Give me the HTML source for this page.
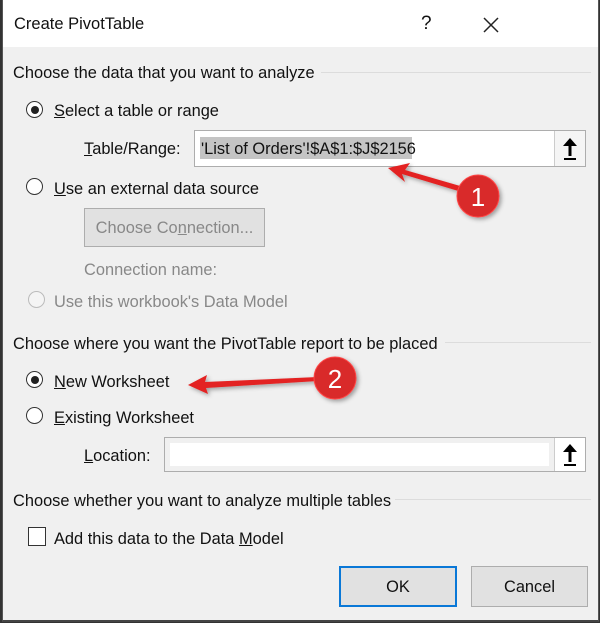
<!DOCTYPE html><html><head><style>
body{margin:0;width:600px;height:623px;overflow:hidden;background:#333;font-family:"Liberation Sans",sans-serif;}
.dlg{position:absolute;left:2px;top:0;width:595px;height:620px;background:#f0f0f0;border-left:1px solid #555;border-right:1px solid #555;border-bottom:2px solid #444}
.title{position:absolute;left:0;top:0;width:595px;height:47px;background:#fff}
.t{position:absolute;font-size:16.4px;color:#111;white-space:nowrap}
.g{color:#888}
.sep{position:absolute;height:1px;background:#dcdcdc}
.rad{position:absolute;width:15px;height:15px;border:1.5px solid #333;border-radius:50%;background:#fff}
.rad.on::after{content:"";position:absolute;left:3.5px;top:3.5px;width:8px;height:8px;border-radius:50%;background:#222}
.box{position:absolute;background:#fff;border:1px solid #adadad}
.btn{position:absolute;background:#e1e1e1;border:1px solid #adadad;font-size:16.4px;text-align:center;color:#111}
.up{position:absolute;width:30px;background:#fff;border-left:1px solid #ccc;top:0;bottom:0;right:0;background:#f0f0f0}
u{text-decoration:underline}
</style></head><body>
<div class="dlg">
<div class="title"></div>
<div class="t" style="left:11px;top:15px;font-size:16.5px">Create PivotTable</div>
<div class="t" style="left:418px;top:13px;font-size:19px">?</div>
<svg style="position:absolute;left:480px;top:17px" width="16" height="16"><path d="M1 1L15 15M15 1L1 15" stroke="#222" stroke-width="1.5"/></svg>

<div class="t" style="left:10px;top:64px">Choose the data that you want to analyze</div>
<div class="sep" style="left:318px;top:72px;width:270px"></div>
<div class="rad on" style="left:23px;top:101px"></div>
<div class="t" style="left:51px;top:102px"><u>S</u>elect a table or range</div>
<div class="t" style="left:81px;top:140px"><u>T</u>able/Range:</div>
<div class="box" style="left:191px;top:130px;width:390px;height:35px">
 <div style="position:absolute;left:5px;top:6px;height:22px;width:212px;background:#c4c4c4"></div>
 <div class="t" style="left:6px;top:9px">'List of Orders'!$A$1:$J$2156</div>
 <div class="up" style="width:30px;background:#f5f5f5"><svg width="30" height="35"><path d="M15 13V25" stroke="#000" stroke-width="3"/><path d="M8 15L15 7L22 15Z" fill="#000"/><path d="M9 28H21" stroke="#000" stroke-width="2"/></svg></div>
</div>
<div class="rad" style="left:23px;top:178px"></div>
<div class="t" style="left:51px;top:180px"><u>U</u>se an external data source</div>
<div class="btn g" style="left:81px;top:208px;width:179px;height:37px;line-height:39px;color:#888">Choose Co<u>n</u>nection...</div>
<div class="t g" style="left:81px;top:261px">Connection name:</div>
<div class="rad" style="left:25px;top:291px;border-color:#bbb;background:#f4f4f4"></div>
<div class="t g" style="left:51px;top:293px">Use this workbook's Data Model</div>

<div class="t" style="left:10px;top:335px">Choose where you want the PivotTable report to be placed</div>
<div class="sep" style="left:442px;top:342px;width:146px"></div>
<div class="rad on" style="left:23px;top:371px"></div>
<div class="t" style="left:51px;top:373px"><u>N</u>ew Worksheet</div>
<div class="rad" style="left:23px;top:407px"></div>
<div class="t" style="left:51px;top:409px"><u>E</u>xisting Worksheet</div>
<div class="t" style="left:81px;top:447px"><u>L</u>ocation:</div>
<div class="box" style="left:161px;top:437px;width:420px;height:33px;background:#f0f0f0">
 <div style="position:absolute;left:5px;top:5px;right:36px;bottom:5px;background:#fff"></div>
 <div class="up" style="width:30px;background:#fff"><svg width="30" height="33"><path d="M15 12V24" stroke="#000" stroke-width="3"/><path d="M8 14L15 6L22 14Z" fill="#000"/><path d="M9 27H21" stroke="#000" stroke-width="2"/></svg></div>
</div>

<div class="t" style="left:10px;top:492px">Choose whether you want to analyze multiple tables</div>
<div class="sep" style="left:392px;top:499px;width:196px"></div>
<div style="position:absolute;left:25px;top:527px;width:16px;height:17px;border:1.5px solid #333;background:#fff"></div>
<div class="t" style="left:51px;top:530px">Add this data to the Data <u>M</u>odel</div>

<div class="btn" style="left:336px;top:566px;width:114px;height:37px;line-height:39px;border:2px solid #0a78d7">OK</div>
<div class="btn" style="left:468px;top:566px;width:115px;height:39px;line-height:41px">Cancel</div>
</div>

<svg style="position:absolute;left:0;top:0" width="600" height="623">
<defs><filter id="s"><feDropShadow dx="2" dy="2" stdDeviation="2" flood-opacity=".35"/></filter></defs>
<g filter="url(#s)">
<path d="M465 193L402 174L405 182L388 168L410 163L405 170L467 188Z" fill="#e32020"/>
<circle cx="478" cy="196" r="21" fill="#d92b2b" stroke="#f44" stroke-width="1"/>
<path d="M318 377L205 382L207 375L188 385L208 394L206 388L318 381Z" fill="#e32020"/>
<circle cx="335" cy="378" r="21" fill="#d92b2b" stroke="#f44" stroke-width="1"/>
</g>
<text x="478" y="206" font-size="26" fill="#fff" text-anchor="middle" font-family="Liberation Sans">1</text>
<text x="335" y="388" font-size="26" fill="#fff" text-anchor="middle" font-family="Liberation Sans">2</text>
</svg>
</body></html>
